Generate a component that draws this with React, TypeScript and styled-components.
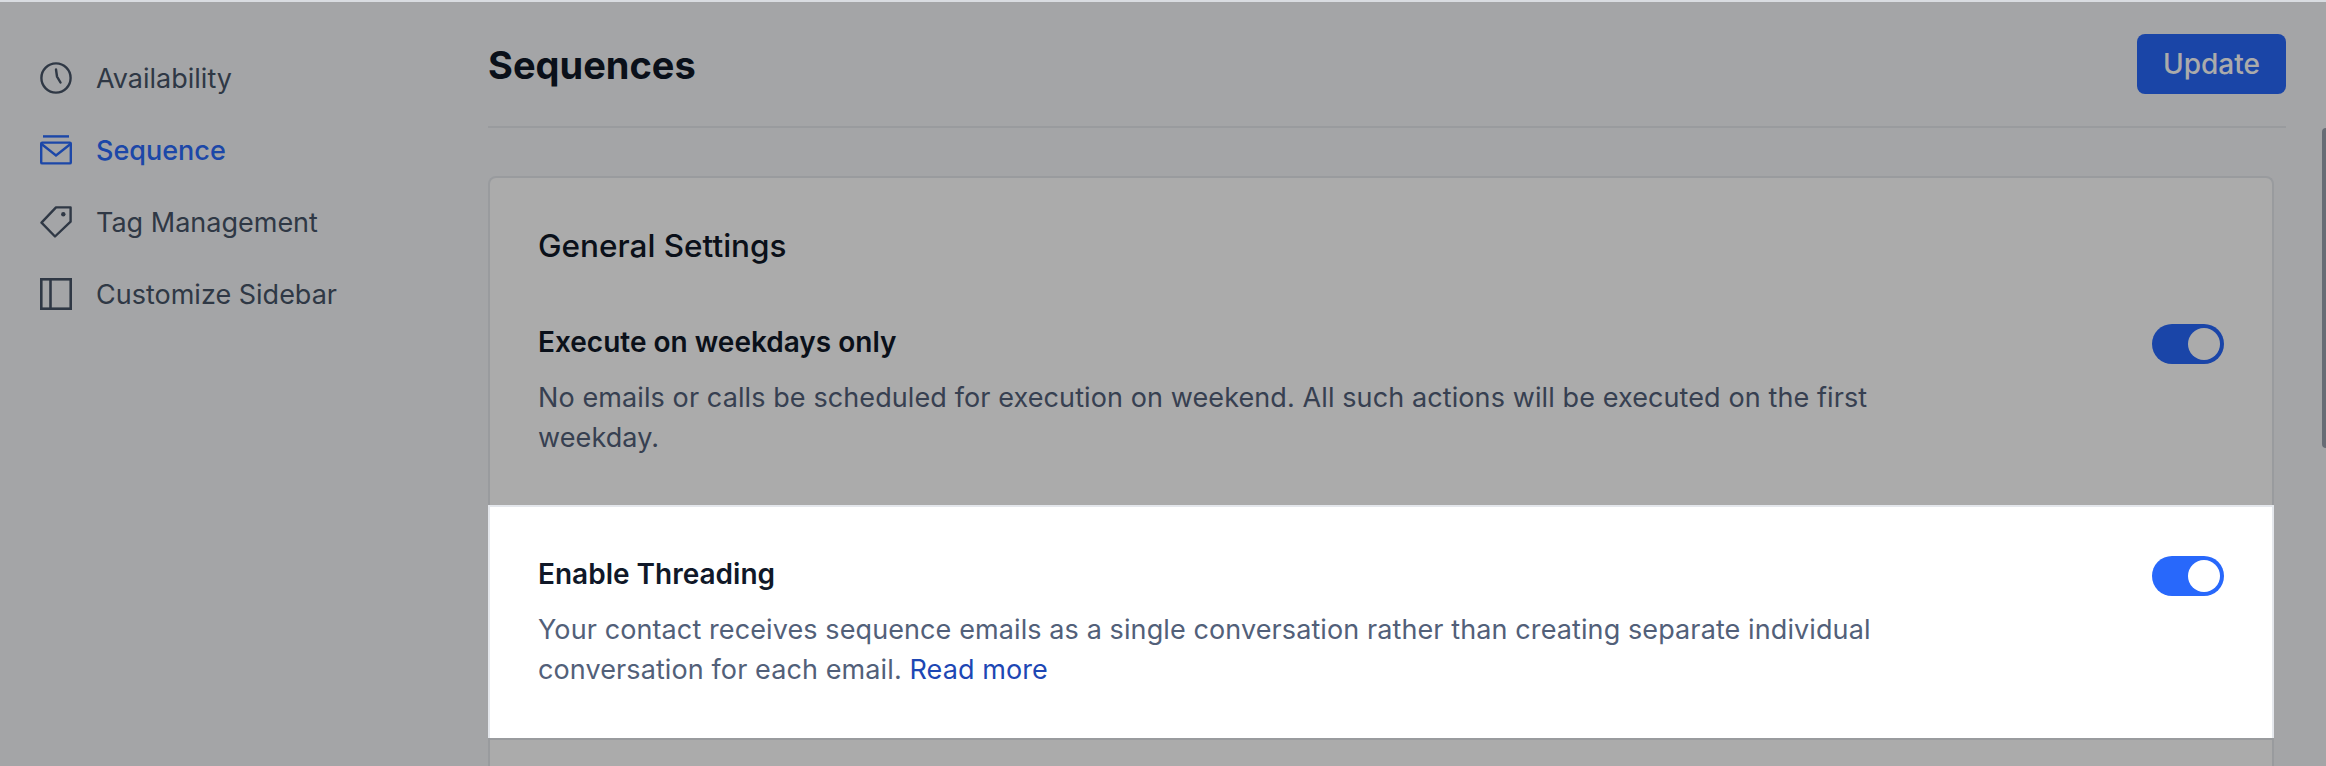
import { createGlobalStyle, styled } from "styled-components";

const GlobalStyle = createGlobalStyle`
  html, body {
    margin: 0;
    height: 100%;
    overflow: hidden;
  }
  body {
    background: #f5f7fa;
    font-family: Inter, "Liberation Sans", sans-serif;
    -webkit-font-smoothing: antialiased;
  }
  * {
    box-sizing: border-box;
  }
`;

// page frame
const Page = styled.div`
  position: relative;
  display: flex;
  height: 766px;
  overflow: hidden;
  border-top: 2px solid #d9dce1;
`;

// --- SIDEBAR ---
const Sidebar = styled.nav`
  width: 488px;
  flex-shrink: 0;
  padding: 52px 0 0 40px;
  display: flex;
  flex-direction: column;
  gap: 24px;
`;

const NavItem = styled.a<{ $active?: boolean }>`
  display: flex;
  align-items: center;
  gap: 24px;
  height: 48px;
  font-size: 27px;
  color: ${(p) => (p.$active ? "#2a6afb" : "#475467")};
  font-weight: ${(p) => (p.$active ? 500 : 400)};
  svg {
    width: 32px;
    height: 32px;
    flex-shrink: 0;
  }
`;

// --- MAIN COLUMN ---
const Main = styled.main`
  flex: 1;
  padding-right: 40px;
`;

const Header = styled.header`
  display: flex;
  align-items: center;
  justify-content: space-between;
  padding: 32px 0;
  border-bottom: 2px solid #e4e7ec;
`;

const Title = styled.h1`
  margin: 2px 0 0;
  font-size: 38px;
  font-weight: 700;
  color: #101828;
`;

const UpdateButton = styled.button`
  width: 149px;
  height: 60px;
  border: none;
  border-radius: 8px;
  background: #2767fa;
  color: #fff;
  font: 500 28px Inter, "Liberation Sans", sans-serif;
`;

const Card = styled.section`
  width: 1786px;
  margin-top: 48px;
  background: #fff;
  border: 2px solid #e4e7ec;
  border-bottom: none;
  border-radius: 8px 8px 0 0;
`;

const CardTitle = styled.h2`
  margin: 0;
  padding: 48px 48px 0;
  font-size: 31.5px;
  line-height: 40px;
  font-weight: 500;
  color: #101828;
`;

const SettingRow = styled.div<{ $spotlight?: boolean }>`
  position: relative;
  display: flex;
  justify-content: space-between;
  height: 233px;
  padding: 48px 48px 0;
  background: #fff;
  ${(p) =>
    p.$spotlight
      ? `
    z-index: 2;
    margin: 0 -2px;
    padding: 47px 48px 0;
    border: 2px solid #e4e7ec;
    border-bottom: none;
    box-shadow: 0 0 0 3000px rgba(0, 0, 0, 0.33);
  `
      : `
    border-top: 2px solid #e4e7ec;
  `}
`;

const FirstRow = styled(SettingRow)`
  height: 239px;
  padding-top: 56px;
  border-top: none;
`;

const RowText = styled.div`
  max-width: 1344px;
`;

const RowTitle = styled.h3`
  margin: 0 0 16px;
  font-size: 28px;
  line-height: 40px;
  font-weight: 600;
  color: #101828;
`;

const RowDescription = styled.p`
  margin: 0;
  font-size: 27px;
  letter-spacing: 0.1px;
  line-height: 40px;
  color: #526079;
`;

const ReadMore = styled.a`
  color: #1d47b4;
`;

const Toggle = styled.span`
  display: flex;
  justify-content: flex-end;
  width: 72px;
  height: 40px;
  margin: 2px 0 0;
  padding: 4px;
  flex-shrink: 0;
  border-radius: 20px;
  background: #2868fb;
  &::after {
    content: "";
    width: 32px;
    height: 32px;
    border-radius: 50%;
    background: #fff;
  }
`;

const ScrollThumb = styled.div`
  position: absolute;
  top: 126px;
  right: 0;
  z-index: 1;
  width: 4px;
  height: 320px;
  border-radius: 4px 0 0 4px;
  background: #9aa1af;
`;

const ClockIcon = () => (
  <svg viewBox="0 0 32 32" fill="none" stroke="currentColor" strokeWidth="2.4" strokeLinecap="round">
    <circle cx="16" cy="16" r="14.6" />
    <path d="M16 7.5l1 7 3.5 6" />
  </svg>
);

const MailIcon = () => (
  <svg viewBox="0 0 32 32" fill="none" stroke="currentColor" strokeWidth="2.4">
    <path d="M3 2.4h26" />
    <rect x="1.2" y="8.6" width="29.6" height="20.8" rx="1" />
    <path d="M1.5 10 16 21.5 30.5 10" />
  </svg>
);

const TagIcon = () => (
  <svg viewBox="0 0 32 32" fill="none" stroke="currentColor" strokeWidth="2.4" strokeLinejoin="round">
    <path d="M1.5 16.7 16 1.4h14.6v14.3L15 30.5z" />
    <circle cx="23.3" cy="8.3" r="2.2" fill="currentColor" stroke="none" />
  </svg>
);

const SidebarIcon = () => (
  <svg viewBox="0 0 32 32" fill="none" stroke="currentColor" strokeWidth="2.6">
    <rect x="1.3" y="1.3" width="29.4" height="29.4" />
    <path d="M10.5 1.5v29" />
  </svg>
);

const App = () => (
  <>
    <GlobalStyle />
    <Page>
      <Sidebar>
        <NavItem>
          <ClockIcon />
          Availability
        </NavItem>
        <NavItem $active>
          <MailIcon />
          Sequence
        </NavItem>
        <NavItem>
          <TagIcon />
          Tag Management
        </NavItem>
        <NavItem>
          <SidebarIcon />
          Customize Sidebar
        </NavItem>
      </Sidebar>
      <Main>
        <Header>
          <Title>Sequences</Title>
          <UpdateButton>Update</UpdateButton>
        </Header>
        <Card>
          <CardTitle>General Settings</CardTitle>
          <FirstRow>
            <RowText>
              <RowTitle>Execute on weekdays only</RowTitle>
              <RowDescription>
                No emails or calls be scheduled for execution on weekend. All such actions will be executed on the first
                weekday.
              </RowDescription>
            </RowText>
            <Toggle />
          </FirstRow>
          <SettingRow $spotlight>
            <RowText>
              <RowTitle>Enable Threading</RowTitle>
              <RowDescription>
                Your contact receives sequence emails as a single conversation rather than creating separate individual
                conversation for each email. <ReadMore>Read more</ReadMore>
              </RowDescription>
            </RowText>
            <Toggle />
          </SettingRow>
          <SettingRow />
        </Card>
      </Main>
      <ScrollThumb />
    </Page>
  </>
);

export default App;
